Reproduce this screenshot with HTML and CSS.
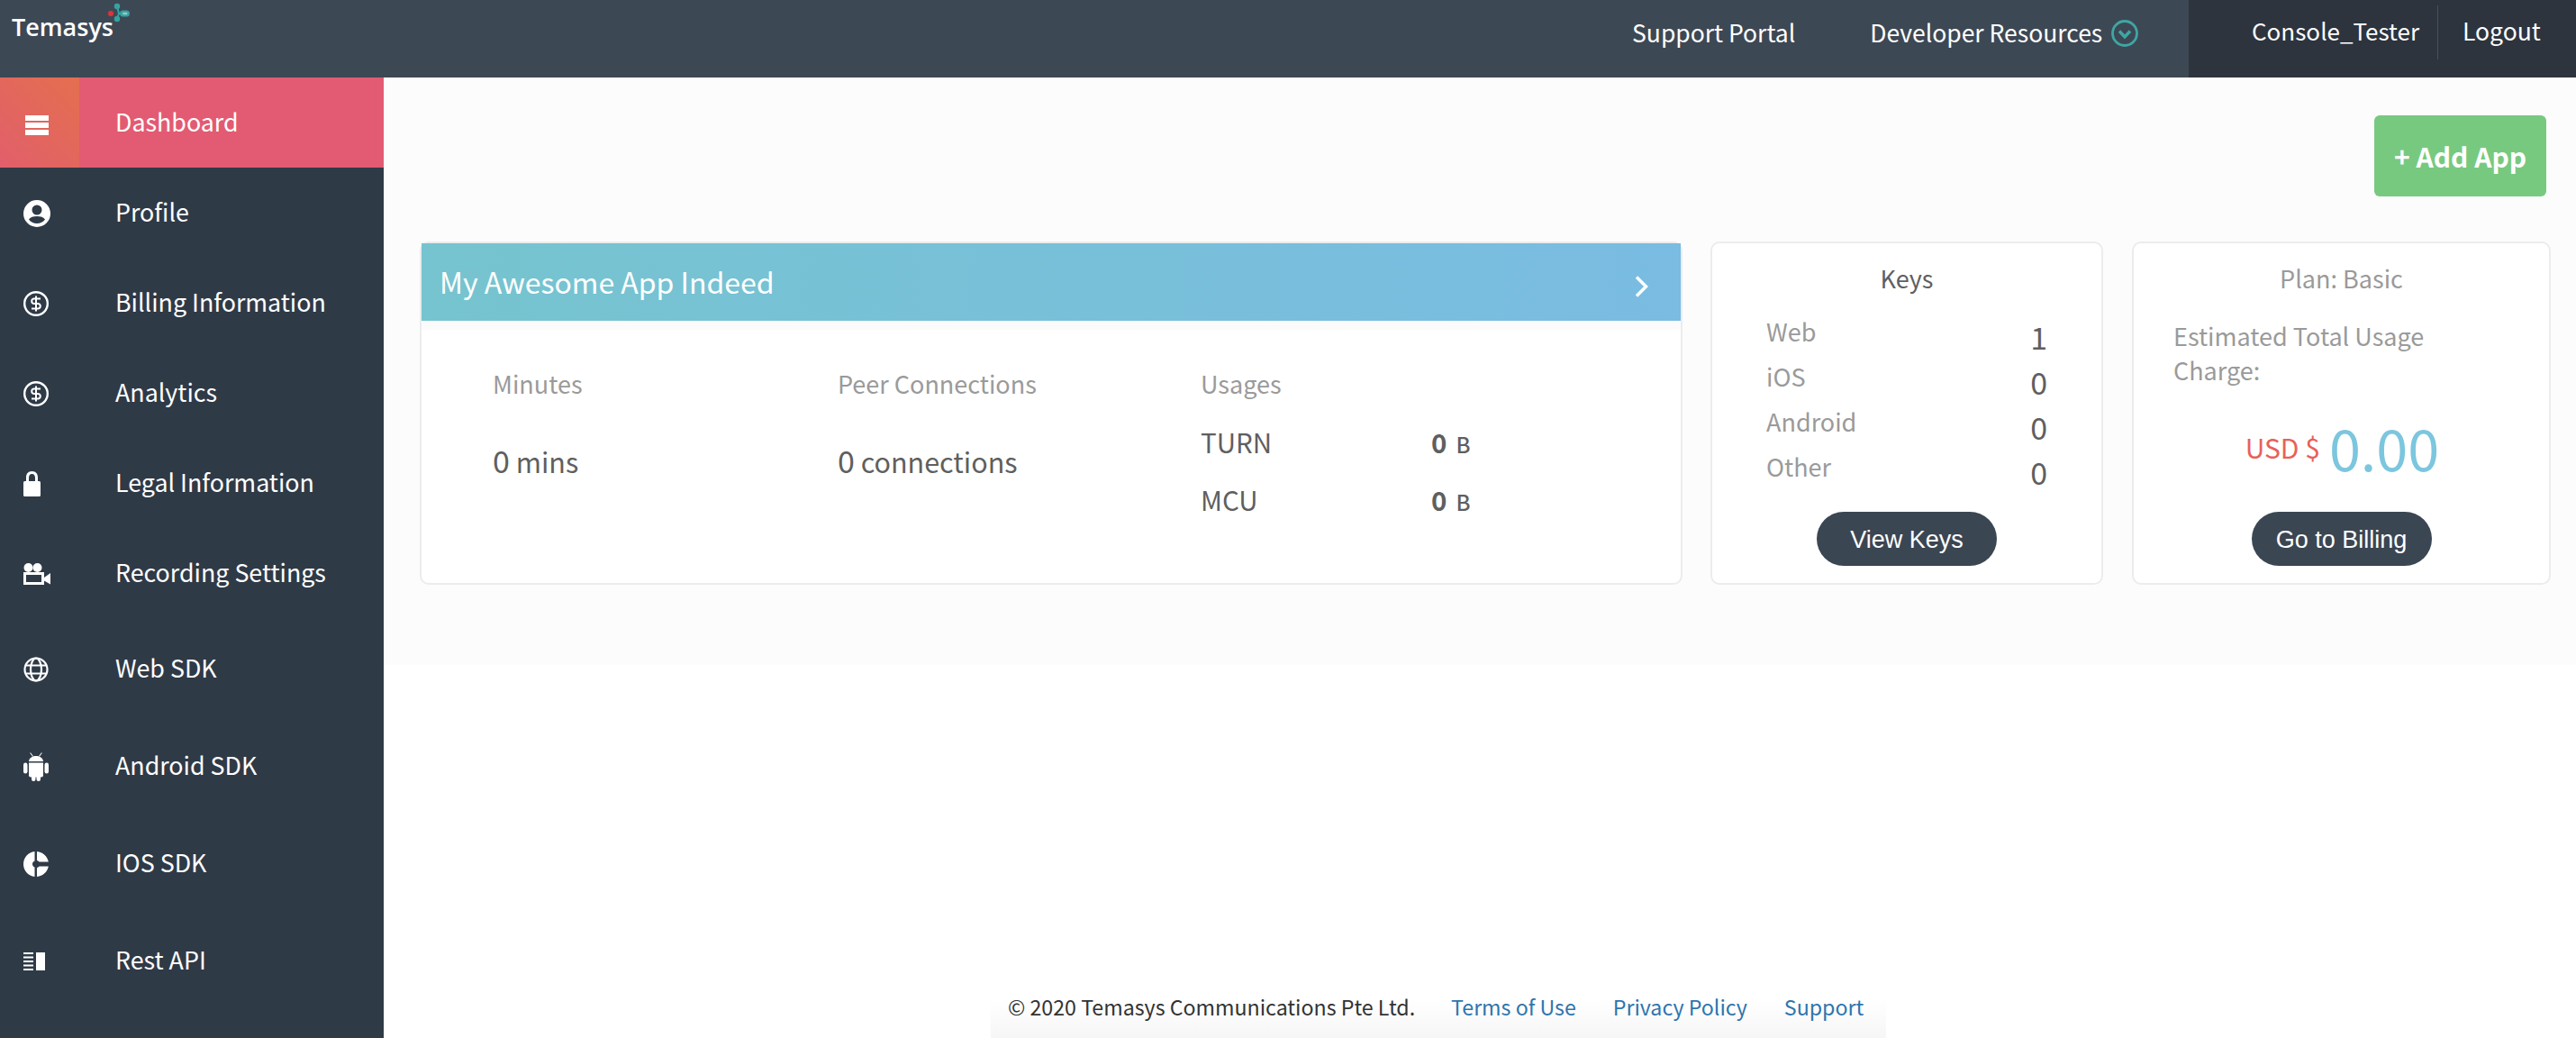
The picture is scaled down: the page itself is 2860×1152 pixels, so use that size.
FILE: index.html
```html
<!DOCTYPE html>
<html lang="en">
<head>
<meta charset="utf-8">
<title>Temasys Console</title>
<link rel="stylesheet" href="styles.css">
</head>
<body>
<header class="topbar">
  <div class="logo">
    <span class="logo-text">Temasys</span>
    <svg class="logo-mark" viewBox="0 0 30 30" width="30" height="30"><circle cx="6" cy="15" r="3" fill="#d9363a"/><path d="M13 7 L15 15 L13 21 M15 15 H18" stroke="#36a3a0" stroke-width="2" fill="none"/><circle cx="13" cy="7" r="3.200" fill="#36a3a0"/><circle cx="13" cy="21" r="3.200" fill="#36a3a0"/><rect x="16" y="11.500" width="11" height="7" rx="3.500" fill="#36a3a0"/><rect x="19" y="13.800" width="5.500" height="2.400" rx="1.200" fill="#8fc9c8"/></svg>
  </div>
  <nav class="topnav">
    <a class="topnav-link">Support Portal</a>
    <a class="topnav-link topnav-dev">Developer Resources
      <svg class="chev-circle" viewBox="0 0 30 30" width="30" height="30"><circle cx="15" cy="15" r="13.500" fill="none" stroke="#3fa6a3" stroke-width="2.800"/><path d="M9 12.500 L15 19 L21 12.500" fill="none" stroke="#3fa6a3" stroke-width="3.400"/></svg>
    </a>
  </nav>
  <div class="userbox">
    <span class="username">Console_Tester</span>
    <span class="logout">Logout</span>
  </div>
</header>
<div class="shell">
  <aside class="sidebar">
    <a class="nav-item active"><span class="nav-icon"><svg viewBox="0 0 26 22" width="26" height="22"><path fill="#fff" d="M0 0h26v6H0zM0 8h26v6H0zM0 16h26v6H0z"/></svg></span><span class="nav-label">Dashboard</span></a>
    <a class="nav-item"><span class="nav-icon"><svg viewBox="0 0 30 30" width="30" height="30"><path fill="#fff" fill-rule="evenodd" d="M15 0a15 15 0 1 0 0 30a15 15 0 1 0 0-30zM15 5.500a5.500 5.500 0 1 1 0 11a5.500 5.500 0 1 1 0-11zM15 26c-3.800 0-7-1.700-9-4.500c1.500-2.500 5-3.500 9-3.500s7.500 1 9 3.500c-2 2.800-5.200 4.500-9 4.500z"/></svg></span><span class="nav-label">Profile</span></a>
    <a class="nav-item"><span class="nav-icon"><svg viewBox="0 0 28 28" width="28" height="28"><circle cx="14" cy="14" r="12.800" fill="none" stroke="#fff" stroke-width="2.400"/><path fill="none" stroke="#fff" stroke-width="2" d="M19 8.500H11.500a2.800 2.800 0 0 0 0 5.500h5a2.800 2.800 0 0 1 0 5.500H9M14 5.500v17"/></svg></span><span class="nav-label">Billing Information</span></a>
    <a class="nav-item"><span class="nav-icon"><svg viewBox="0 0 28 28" width="28" height="28"><circle cx="14" cy="14" r="12.800" fill="none" stroke="#fff" stroke-width="2.400"/><path fill="none" stroke="#fff" stroke-width="2" d="M19 8.500H11.500a2.800 2.800 0 0 0 0 5.500h5a2.800 2.800 0 0 1 0 5.500H9M14 5.500v17"/></svg></span><span class="nav-label">Analytics</span></a>
    <a class="nav-item"><span class="nav-icon"><svg viewBox="0 0 19 28" width="19" height="28"><path fill="#fff" fill-rule="evenodd" d="M9.500 0C5 0 3 3 3 7v4H1.500A1.500 1.500 0 0 0 0 12.500V26.500A1.500 1.500 0 0 0 1.500 28h16a1.500 1.500 0 0 0 1.500-1.500V12.500A1.500 1.500 0 0 0 17.500 11H16V7c0-4-2-7-6.500-7zM6 11V7.500C6 5 7 3 9.500 3S13 5 13 7.500V11z"/></svg></span><span class="nav-label">Legal Information</span></a>
    <a class="nav-item"><span class="nav-icon"><svg viewBox="0 0 30 24" width="30" height="24"><g fill="#fff"><circle cx="5.500" cy="5" r="5"/><circle cx="15.500" cy="5" r="5"/><path fill-rule="evenodd" d="M0 10h23v14H0zM3 13v8h17v-8z"/><path d="M23 16l7-5v12.500l-7-4z"/></g></svg></span><span class="nav-label">Recording Settings</span></a>
    <a class="nav-item tall"><span class="nav-icon"><svg viewBox="0 0 28 28" width="28" height="28"><g fill="none" stroke="#fff" stroke-width="2.200"><circle cx="14" cy="14" r="12.500"/><ellipse cx="14" cy="14" rx="6" ry="12.500"/><path d="M2 9.500h24M2 18.500h24"/></g></svg></span><span class="nav-label">Web SDK</span></a>
    <a class="nav-item tall"><span class="nav-icon"><svg viewBox="0 0 28 32" width="28" height="32"><g fill="#fff"><path d="M6 10c.3-3.500 3.500-6 8-6s7.700 2.500 8 6z"/><path d="M6 11.500h16v14a2 2 0 0 1-2 2H8a2 2 0 0 1-2-2z"/><rect x="0" y="11.500" width="4.500" height="12" rx="2.200"/><rect x="23.500" y="11.500" width="4.500" height="12" rx="2.200"/><rect x="9" y="25" width="4.500" height="7" rx="2.200"/><rect x="14.500" y="25" width="4.500" height="7" rx="2.200"/><path d="M8 .3l3 4-.8.5-3-4zM20 .3l-3 4 .8.5 3-4z"/></g></svg></span><span class="nav-label">Android SDK</span></a>
    <a class="nav-item tall"><span class="nav-icon"><svg viewBox="0 0 28 28" width="28" height="28"><path fill="#fff" d="M12.500 0v10.500c-1.300.4-2.500 1.800-2.500 3.500s1.200 3.100 2.500 3.500V28C5.500 27.300 0 21.300 0 14S5.500.7 12.500 0zM15 0c6.500.6 11.700 5.400 12.800 11.500H17.500c-.5-.8-1.400-1.300-2.500-1.500zM15 18c1.100-.2 2-.7 2.500-1.500H27.800C26.700 22.600 21.500 27.400 15 28z"/></svg></span><span class="nav-label">IOS SDK</span></a>
    <a class="nav-item tall"><span class="nav-icon"><svg viewBox="0 0 24 20" width="24" height="20"><path fill="#fff" d="M0 0h11v2H0zM0 4.500h11v2H0zM0 9h11v2H0zM0 13.500h11v2H0zM0 18h11v2H0zM14 0h10v20H14z"/></svg></span><span class="nav-label">Rest API</span></a>
  </aside>
  <main class="main">
    <div class="dash">
      <div class="actions"><a class="add-app">+ Add App</a></div>
      <div class="cards">
        <section class="card app-card">
          <div class="app-head"><span class="app-title">My Awesome App Indeed</span><svg class="app-arrow" viewBox="0 0 15 24" width="15" height="24"><path d="M2 1.500 L12.500 12 L2 22.500" fill="none" stroke="#fff" stroke-width="3.500"/></svg></div>
          <div class="app-band"></div>
          <div class="app-body">
            <div class="stat stat-min"><div class="stat-label">Minutes</div><div class="stat-value"><span class="big">0</span> mins</div></div>
            <div class="stat stat-peer"><div class="stat-label">Peer Connections</div><div class="stat-value"><span class="big">0</span> connections</div></div>
            <div class="stat stat-use">
              <div class="stat-label">Usages</div>
              <div class="use-row first"><span class="use-name">TURN</span><span class="use-val">0<small>B</small></span></div>
              <div class="use-row"><span class="use-name">MCU</span><span class="use-val">0<small>B</small></span></div>
            </div>
          </div>
        </section>
        <section class="card keys-card">
          <h3 class="keys-title">Keys</h3>
          <div class="key-row"><span class="key-name">Web</span><span class="key-val">1</span></div>
          <div class="key-row"><span class="key-name">iOS</span><span class="key-val">0</span></div>
          <div class="key-row"><span class="key-name">Android</span><span class="key-val">0</span></div>
          <div class="key-row"><span class="key-name">Other</span><span class="key-val">0</span></div>
          <a class="pill">View Keys</a>
        </section>
        <section class="card plan-card">
          <h3 class="plan-title">Plan: Basic</h3>
          <p class="plan-text">Estimated Total Usage Charge:</p>
          <div class="amount"><span class="cur">USD $</span><span class="num">0.00</span></div>
          <a class="pill">Go to Billing</a>
        </section>
      </div>
    </div>
    <footer class="footer">
      <span class="copy">© 2020 Temasys Communications Pte Ltd.</span>
      <a class="flink">Terms of Use</a>
      <a class="flink">Privacy Policy</a>
      <a class="flink">Support</a>
    </footer>
  </main>
</div>
</body>
</html>
```
FILE: styles.css
```css
* { box-sizing: border-box; }
html, body { margin: 0; padding: 0; height: 100%; }
body { font-family: "Noto Sans CJK SC", "Source Sans Pro", sans-serif; background: #fff; color: #5f5f5f; height: 1152px; overflow: hidden; }
a { text-decoration: none; color: inherit; }

.topbar { height: 86px; background: #3d4855; display: flex; align-items: stretch; color: #fff; font-size: 26.5px; }
.logo { display: flex; align-items: flex-start; padding: 9px 0 0 13px; width: 1780px; }
.logo-text { font-family: "Open Sans", sans-serif; font-size: 27px; font-weight: 600; line-height: 42px; }
.logo-mark { margin: -9px 0 0 -9px; }
.topnav { flex: 1; display: flex; padding-top: 15px; gap: 83px; padding-left: 32px; line-height: 42px; }
.topnav-link { display: flex; gap: 10px; align-items: flex-start; white-space: nowrap; }
.chev-circle { margin-top: 7px; }
.userbox { width: 430px; background: #2d343e; display: flex; padding: 6px 0 0 70px; line-height: 56px; }
.username { width: 207px; height: 60px; border-right: 1px solid #46505c; white-space: nowrap; font-size: 26px; }
.logout { padding-left: 27px; }

.shell { display: flex; height: 1066px; }
.sidebar { width: 426px; flex: none; background: #2f3a47; display: flex; flex-direction: column; }
.nav-item { height: 100px; display: flex; align-items: center; color: #fff; font-size: 26.800px; }
.nav-item.tall { height: 108px; padding-top: 4px; }
.nav-item.active { background: #e25b72; }
.nav-icon { width: 88px; align-self: stretch; display: flex; align-items: center; padding-left: 26px; flex: none; padding-top: 2px; }
.active .nav-icon { background: linear-gradient(45deg, #e15f6b, #e46f4f); justify-content: center; padding-left: 0; padding-right: 6px; padding-top: 6px; }
.nav-label { padding-left: 40px; margin-top: -3px; white-space: nowrap; }

.main { flex: 1; display: flex; flex-direction: column; background: #fff; }
.dash { background: #fcfcfc; height: 652px; padding: 42px 28px 0 40px; }
.actions { display: flex; justify-content: flex-end; height: 140px; padding-right: 5px; }
.add-app { width: 191px; height: 90px; background: #78c980; color: #fff; border-radius: 6px; font-size: 30px; font-weight: 700; display: flex; align-items: center; justify-content: center; }
.cards { display: flex; }
.card { background: #fff; border: 2px solid #ececec; border-radius: 10px; height: 381px; font-size: 27px; }
.app-card { width: 1402px; margin-right: 31px; display: flex; flex-direction: column; padding: 0; }
.app-head { height: 86px; background: linear-gradient(90deg, #76c4cf, #7abce2); color: #fff; display: flex; align-items: center; justify-content: space-between; padding: 0 36px 0 20px; font-size: 32px; flex: none; }
.app-title { margin-top: -2px; }
.app-arrow { margin-top: 10px; }
.app-band { height: 10px; background: #fbfbfb; flex: none; }
.app-body { flex: 1; display: flex; padding-top: 38px; }
.stat-min { width: 383px; margin-left: 79px; }
.stat-peer { width: 403px; }
.stat-label { color: #9a9a9a; font-size: 27px; line-height: 44px; }
.stat-value { color: #5f5f5f; font-size: 30.500px; line-height: 50px; margin-top: 38px; }
.big { font-size: 34px; }
.use-row { display: flex; color: #5f5f5f; font-size: 29.500px; line-height: 44px; height: 64px; }
.use-row.first { margin-top: 20px; }
.use-name { width: 256px; }
.use-val { font-weight: 700; display: flex; align-items: baseline; }
.use-val small { font-size: 24px; margin-left: 10px; font-weight: 500; }

.keys-card { width: 436px; margin-right: 32px; padding: 14px 60px 0 60px; display: flex; flex-direction: column; }
.keys-title { margin: 0 0 12px; text-align: center; font-weight: 400; font-size: 27px; line-height: 50px; color: #5f5f5f; }
.key-row { display: flex; justify-content: space-between; height: 50px; }
.key-name { color: #9a9a9a; line-height: 44px; }
.key-val { color: #5f5f5f; font-size: 34px; line-height: 56px; }
.pill { align-self: center; display: flex; width: 200px; height: 60px; align-items: center; justify-content: center; background: #3b4653; color: #fff; border-radius: 30px; font-family: "Liberation Sans", Arial, sans-serif; font-size: 27px; margin-top: auto; margin-bottom: 19px; padding-top: 2px; flex: none; }
.plan-card { width: 465px; padding: 14px 44px 0 44px; display: flex; flex-direction: column; }
.plan-title { margin: 0 0 20px; text-align: center; font-weight: 400; font-size: 27px; line-height: 50px; color: #9a9a9a; }
.plan-text { margin: 0; color: #9a9a9a; line-height: 38px; width: 330px; }
.amount { text-align: center; height: 80px; margin-top: 26px; display: flex; justify-content: center; align-items: center; gap: 10px; padding-left: 2px; }
.cur { color: #e8605c; font-size: 30px; }
.num { color: #7cc6de; font-size: 63px; line-height: 80px; }

.footer { display: flex; align-items: flex-end; width: 994px; margin-left: 674px; background: linear-gradient(#fff, #fff 30%, #f6f6f6) bottom / 100% 62px no-repeat; padding: 0 0 13px 19px; font-size: 23.200px; line-height: 44px; white-space: nowrap; flex: none; height: 414px; }
.copy { color: #333; margin-right: 40px; }
.flink { color: #2f75ad; margin-right: 41px; }
```
